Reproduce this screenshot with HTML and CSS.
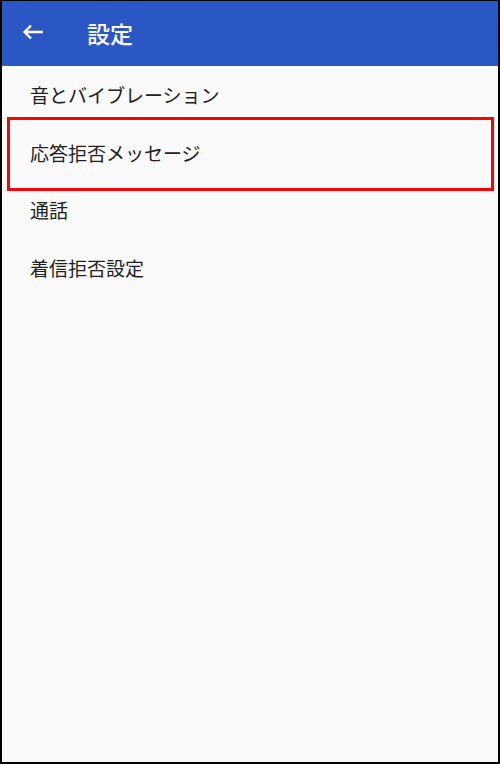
FILE: index.html
```html
<!DOCTYPE html>
<html lang="ja">
<head>
<meta charset="utf-8">
<title>設定</title>
<link rel="stylesheet" href="styles.css">
</head>
<body>
<div class="frame">
  <header class="appbar">
    <svg class="back" width="22" height="16" viewBox="0 0 22 16" aria-hidden="true">
      <path d="M2.5 8H21M9 1.5L2.5 8L9 14.5" fill="none" stroke="#ffffff" stroke-width="2.4" stroke-linecap="butt" stroke-linejoin="miter"/>
    </svg>
    <h1 class="title">設定</h1>
  </header>
  <ul class="list">
    <li class="item">音とバイブレーション</li>
    <li class="item highlight">応答拒否メッセージ</li>
    <li class="item">通話</li>
    <li class="item">着信拒否設定</li>
  </ul>
</div>
</body>
</html>
```
FILE: styles.css
```css
html, body {
  margin: 0;
  padding: 0;
}
body {
  width: 500px;
  height: 764px;
  background: #fafafa;
  font-family: "Noto Sans CJK JP", "Noto Sans", sans-serif;
}
.frame {
  box-sizing: border-box;
  width: 500px;
  height: 764px;
  border-style: solid;
  border-color: #000000;
  border-width: 1px 2px 2px 2px;
  background: #fafafa;
  display: flex;
  flex-direction: column;
}
.appbar {
  height: 65px;
  flex: 0 0 65px;
  background: #2b57c5;
  display: flex;
  align-items: center;
  padding-left: 20px;
}
.back {
  display: block;
  margin-bottom: 4px;
}
.title {
  margin: 0 0 0 43px;
  font-size: 23px;
  font-weight: 500;
  color: #ffffff;
  line-height: 1;
}
.list {
  list-style: none;
  margin: 0;
  padding: 0;
}
.item {
  position: relative;
  height: 57.5px;
  display: flex;
  align-items: center;
  padding-left: 28px;
  font-size: 19px;
  color: #212121;
}
.highlight::after {
  content: "";
  position: absolute;
  left: 5px;
  right: 4px;
  top: -6.5px;
  bottom: -10px;
  border: 3px solid #ff0000;
}
```
